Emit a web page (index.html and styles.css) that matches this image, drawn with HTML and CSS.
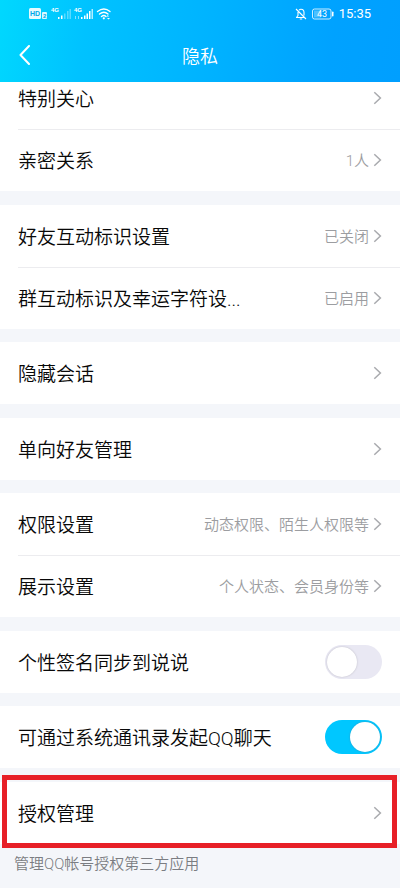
FILE: index.html
```html
<!DOCTYPE html>
<html lang="zh-CN">
<head>
<meta charset="utf-8">
<meta name="viewport" content="width=device-width, initial-scale=1">
<title>隐私</title>
<link rel="stylesheet" href="styles.css">
</head>
<body>
<svg class="defs" aria-hidden="true">
  <symbol id="chevron" viewBox="0 0 9 14"><path d="M1.3 1.3 7.4 7l-6.1 5.7"/></symbol>
</svg>
<header class="header">
  <div class="status">
    <svg class="status-left" width="84" height="16" viewBox="0 0 84 16" fill="#fff" aria-hidden="true">
      <rect x="1" y="2" width="12" height="11" rx="1.5" fill-opacity=".9"/>
      <text x="2" y="10" font-size="7" font-weight="700" fill="#00a8e8">HD</text>
      <rect x="14" y="6" width="5" height="7" rx="1" fill-opacity=".85"/>
      <text x="15" y="12" font-size="6" font-weight="700" fill="#00a8e8">2</text>
      <text x="23" y="6" font-size="6" font-weight="700">4G</text>
      <path d="M30 11h1.500v2H30zM33 9.500h1.500V13H33z"/>
      <path d="M36 7.500h1.500V13H36zM39 5h1.500v8H39zM41.500 3H43v10h-1.500z" fill-opacity=".35"/>
      <text x="46" y="6" font-size="6" font-weight="700">4G</text>
      <path d="M47 10h1v3h-1zM50 10h1v3h-1z" fill-opacity=".5"/>
      <path d="M53 11h1.500v2H53zM56 9.500h1.500V13H56zM58.500 7.500H60V13h-1.500zM61 5h1.500v8H61z"/>
      <path d="M63.500 3H65v10h-1.500z" fill-opacity=".7"/>
      <g fill="none" stroke="#fff" stroke-width="1.300" stroke-linecap="round"><path d="M69.500 5.500q6.500-5 12.500 0M71.500 8q4.500-3.500 8.500 0M73.500 10.500q2.500-2 4.500 0"/></g>
      <circle cx="75.800" cy="12.300" r="1.100"/>
      <path d="m78.500 10.500 1.300-1.500 1.200 1.500zM79 12h3l-1.500 1.500z"/>
    </svg>
    <div class="status-right">
      <svg width="12" height="14" viewBox="0 0 12 14" fill="none" stroke="#fff" stroke-width="1.100" stroke-linejoin="round" aria-hidden="true">
        <path d="M4 3.200C4.500 2.500 5 2.200 6 2.200c2 0 3 1.500 3 3.300v3M3 5v3.500L1.500 10.500h8M4.800 12h2.400M1 2l10 10"/>
      </svg>
      <svg width="22" height="12" viewBox="0 0 22 12" aria-hidden="true">
        <rect x=".500" y="1" width="18.500" height="10" rx="2" fill="none" stroke="#fff" stroke-opacity=".8"/>
        <rect x="2" y="2.500" width="7" height="7" fill="#fff" fill-opacity=".3"/>
        <rect x="20" y="3.500" width="1.500" height="5" rx=".700" fill="#fff"/>
        <text x="10" y="9" text-anchor="middle" font-size="9" fill="#fff">43</text>
      </svg>
      <span class="clock">15:35</span>
    </div>
  </div>
  <div class="navbar">
    <button class="back" type="button" aria-label="返回">
      <svg width="12" height="20" viewBox="0 0 12 20" fill="none" stroke="#fff" stroke-width="2" stroke-linecap="round" stroke-linejoin="round" aria-hidden="true"><path d="M10 1 1.500 10 10 19"/></svg>
    </button>
    <h1 class="title">隐私</h1>
  </div>
</header>
<main class="settings">
  <section class="group">
    <a class="row" href="#care"><span class="label">特别关心</span><svg class="chevron"><use href="#chevron"/></svg></a>
    <a class="row" href="#close"><span class="label">亲密关系</span><span class="value">1人</span><svg class="chevron"><use href="#chevron"/></svg></a>
  </section>
  <section class="group">
    <a class="row" href="#friend-badge"><span class="label">好友互动标识设置</span><span class="value">已关闭</span><svg class="chevron"><use href="#chevron"/></svg></a>
    <a class="row" href="#group-badge"><span class="label">群互动标识及幸运字符设...</span><span class="value">已启用</span><svg class="chevron"><use href="#chevron"/></svg></a>
  </section>
  <section class="group">
    <a class="row" href="#hidden"><span class="label">隐藏会话</span><svg class="chevron"><use href="#chevron"/></svg></a>
  </section>
  <section class="group">
    <a class="row" href="#one-way"><span class="label">单向好友管理</span><svg class="chevron"><use href="#chevron"/></svg></a>
  </section>
  <section class="group">
    <a class="row" href="#permissions"><span class="label">权限设置</span><span class="value">动态权限、陌生人权限等</span><svg class="chevron"><use href="#chevron"/></svg></a>
    <a class="row" href="#display"><span class="label">展示设置</span><span class="value">个人状态、会员身份等</span><svg class="chevron"><use href="#chevron"/></svg></a>
  </section>
  <section class="group">
    <div class="row"><label class="label" for="sync">个性签名同步到说说</label><input class="switch" id="sync" type="checkbox" role="switch"></div>
  </section>
  <section class="group">
    <div class="row"><label class="label" for="contacts">可通过系统通讯录发起QQ聊天</label><input class="switch" id="contacts" type="checkbox" role="switch" checked></div>
  </section>
  <section class="group highlighted">
    <a class="row" href="#auth"><span class="label">授权管理</span><svg class="chevron"><use href="#chevron"/></svg></a>
  </section>
  <p class="note">管理QQ帐号授权第三方应用</p>
</main>
</body>
</html>
```

FILE: styles.css
```css
* {
  box-sizing: border-box;
}

body {
  margin: 0;
  min-height: 100vh;
  background: #f4f6fa;
  color: #080808;
  font-family: Roboto, "Noto Sans CJK SC DemiLight", "Noto Sans CJK SC", sans-serif;
  font-weight: 350;
}

.defs {
  position: absolute;
  width: 0;
  height: 0;
}

.header {
  position: relative;
  z-index: 1;
  color: #fff;
  background: linear-gradient(100deg, #00d8fe 0%, #00c2ff 22%, #00b4ff 50%, #00a2ff 82%, #009fff 100%);
}

.status {
  display: flex;
  align-items: center;
  justify-content: space-between;
  height: 28px;
  padding: 0 29px 0 28px;
}

.status-left {
  font-family: "Liberation Sans", sans-serif;
}

.status-right {
  display: flex;
  align-items: center;
  gap: 5px;
  font-weight: 400;
}

.clock {
  font-size: 13px;
  line-height: 16px;
}

.navbar {
  display: grid;
  grid-template-columns: 48px 1fr 48px;
  align-items: center;
  height: 54px;
}

.back {
  display: flex;
  align-items: center;
  height: 48px;
  padding: 0 0 0 19px;
  border: 0;
  background: none;
}

.title {
  margin: 0;
  padding-top: 3px;
  font-size: 18px;
  font-weight: 400;
  line-height: 24px;
  text-align: center;
}

/* The list is scrolled slightly beneath the header. */
.settings {
  margin-top: -15px;
}

.group {
  position: relative;
  background: #fff;
}

.group:nth-child(even) {
  margin-top: 14px;
}

.group:nth-child(odd) {
  margin-top: 13px;
}

.group:first-child {
  margin-top: 0;
}

.row {
  position: relative;
  display: flex;
  align-items: center;
  height: 62px;
  padding: 0 18px;
  color: inherit;
  text-decoration: none;
}

.row + .row::before {
  content: "";
  position: absolute;
  top: 0;
  right: 0;
  left: 18px;
  height: 1px;
  background: #ececef;
}

.label {
  flex: 1;
  padding-top: 3px;
  font-size: 19px;
  line-height: 28px;
  white-space: nowrap;
}

.value {
  padding-top: 2px;
  color: #9c9da1;
  font-size: 15px;
  line-height: 24px;
  white-space: nowrap;
}

.chevron {
  width: 9px;
  height: 14px;
  margin-left: 4px;
  fill: none;
  stroke: #a9aaae;
  stroke-width: 1.5;
}

.switch {
  appearance: none;
  display: flex;
  align-items: center;
  width: 57px;
  height: 34px;
  margin: 0;
  padding: 0 2px;
  border-radius: 17px;
  background: #e9e8f3;
}

.switch::before {
  content: "";
  width: 30px;
  height: 30px;
  border-radius: 50%;
  background: #fff;
  box-shadow: 0 0 2px #b9b8c2;
}

.switch:checked {
  justify-content: flex-end;
  background: #00c7ff;
}

.switch:checked::before {
  box-shadow: 0 0 2px #3698bd;
}

.highlighted::after {
  content: "";
  position: absolute;
  inset: -7px 3px -4px 2px;
  border: 5px solid #e71f27;
  pointer-events: none;
}

.note {
  margin: 0;
  padding: 8px 14px 0;
  color: #7b7d82;
  font-size: 15px;
  line-height: 24px;
}
```
